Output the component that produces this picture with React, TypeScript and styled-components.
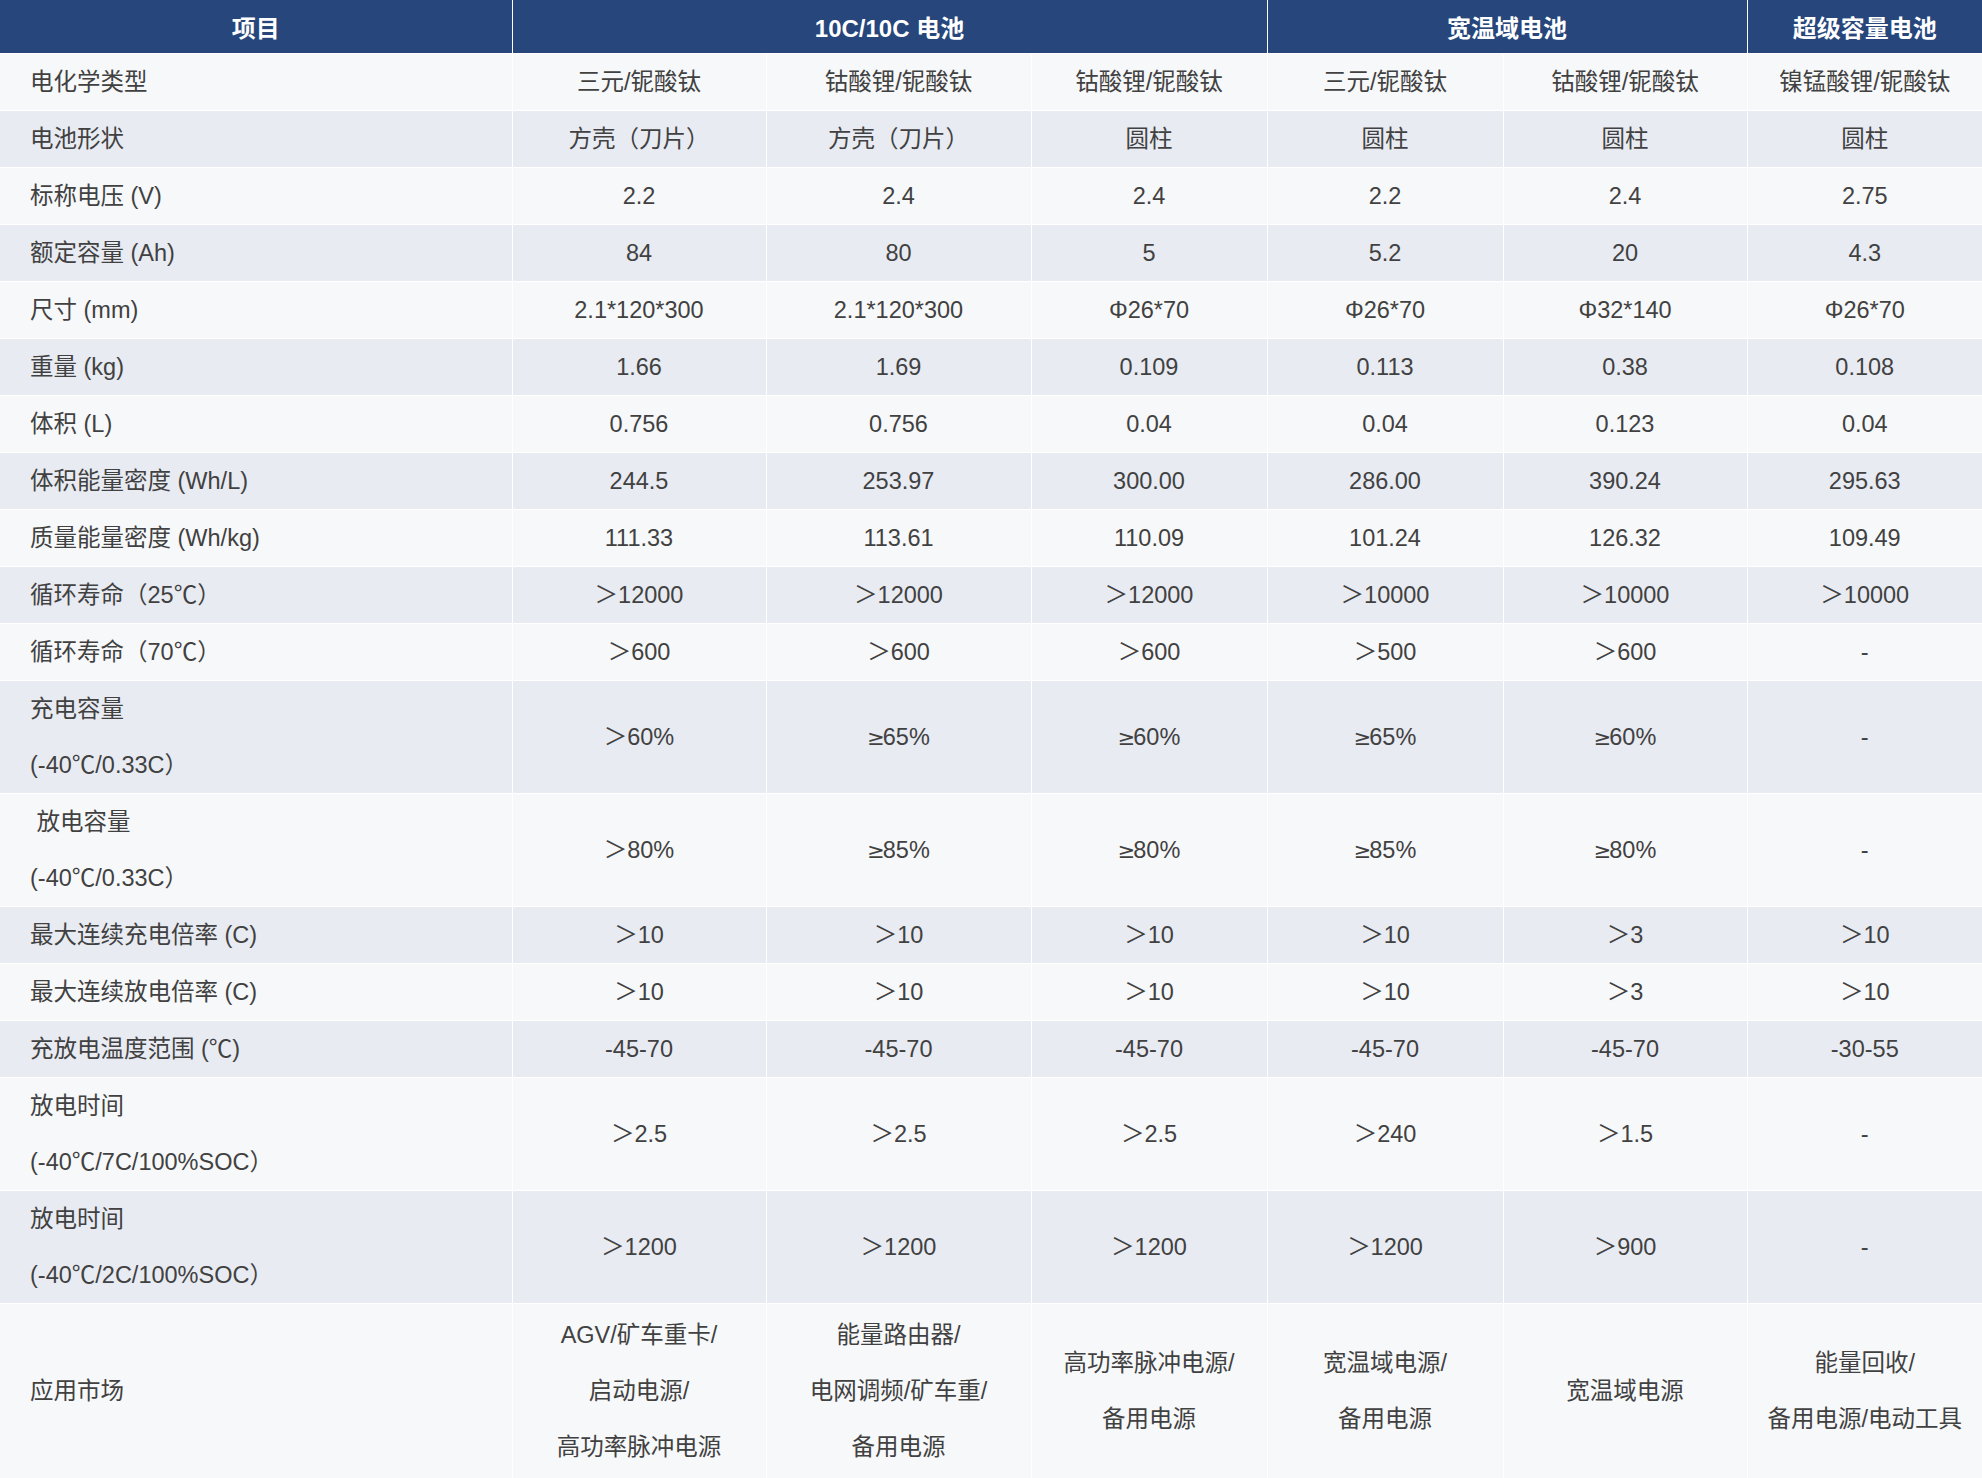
import * as React from "react";
import styled, { createGlobalStyle } from "styled-components";

const HEADER_BG = "#26467c";
const ROW_LIGHT = "#f7f8fa";
const ROW_DARK = "#e8ebf2";
const TEXT = "#414141";
const LINE = 56;

const COLUMN_WIDTHS = [512, 254, 265, 236, 236, 244, 235];

type Cell = string | string[];

interface SpecRow {
  label: Cell;
  values: Cell[];
  tall?: boolean;
}

const GROUPS = [
  { title: "项目", span: 1 },
  { title: "10C/10C 电池", span: 3 },
  { title: "宽温域电池", span: 2 },
  { title: "超级容量电池", span: 1 },
];

const ROWS: SpecRow[] = [
  { label: "电化学类型", values: ["三元/铌酸钛", "钴酸锂/铌酸钛", "钴酸锂/铌酸钛", "三元/铌酸钛", "钴酸锂/铌酸钛", "镍锰酸锂/铌酸钛"] },
  { label: "电池形状", values: ["方壳（刀片）", "方壳（刀片）", "圆柱", "圆柱", "圆柱", "圆柱"] },
  { label: "标称电压 (V)", values: ["2.2", "2.4", "2.4", "2.2", "2.4", "2.75"] },
  { label: "额定容量 (Ah)", values: ["84", "80", "5", "5.2", "20", "4.3"] },
  { label: "尺寸 (mm)", values: ["2.1*120*300", "2.1*120*300", "Φ26*70", "Φ26*70", "Φ32*140", "Φ26*70"] },
  { label: "重量 (kg)", values: ["1.66", "1.69", "0.109", "0.113", "0.38", "0.108"] },
  { label: "体积 (L)", values: ["0.756", "0.756", "0.04", "0.04", "0.123", "0.04"] },
  { label: "体积能量密度 (Wh/L)", values: ["244.5", "253.97", "300.00", "286.00", "390.24", "295.63"] },
  { label: "质量能量密度 (Wh/kg)", values: ["111.33", "113.61", "110.09", "101.24", "126.32", "109.49"] },
  { label: "循环寿命（25℃）", values: ["＞12000", "＞12000", "＞12000", "＞10000", "＞10000", "＞10000"] },
  { label: "循环寿命（70℃）", values: ["＞600", "＞600", "＞600", "＞500", "＞600", "-"] },
  { label: ["充电容量", "(-40℃/0.33C）"], values: ["＞60%", "≥65%", "≥60%", "≥65%", "≥60%", "-"] },
  { label: ["\u00a0放电容量", "(-40℃/0.33C）"], values: ["＞80%", "≥85%", "≥80%", "≥85%", "≥80%", "-"] },
  { label: "最大连续充电倍率 (C)", values: ["＞10", "＞10", "＞10", "＞10", "＞3", "＞10"] },
  { label: "最大连续放电倍率 (C)", values: ["＞10", "＞10", "＞10", "＞10", "＞3", "＞10"] },
  { label: "充放电温度范围 (℃)", values: ["-45-70", "-45-70", "-45-70", "-45-70", "-45-70", "-30-55"] },
  { label: ["放电时间", "(-40℃/7C/100%SOC）"], values: ["＞2.5", "＞2.5", "＞2.5", "＞240", "＞1.5", "-"] },
  { label: ["放电时间", "(-40℃/2C/100%SOC）"], values: ["＞1200", "＞1200", "＞1200", "＞1200", "＞900", "-"] },
  {
    label: "应用市场",
    tall: true,
    values: [
      ["AGV/矿车重卡/", "启动电源/", "高功率脉冲电源"],
      ["能量路由器/", "电网调频/矿车重/", "备用电源"],
      ["高功率脉冲电源/", "备用电源"],
      ["宽温域电源/", "备用电源"],
      "宽温域电源",
      ["能量回收/", "备用电源/电动工具"],
    ],
  },
];

const GlobalStyle = createGlobalStyle`
  html, body {
    margin: 0;
    padding: 0;
    background: #ffffff;
  }
  body {
    font-family: "Liberation Sans", "Noto Sans CJK SC", sans-serif;
    -webkit-font-smoothing: antialiased;
  }
`;

const SpecTable = styled.table`
  width: 1982px;
  table-layout: fixed;
  border-collapse: collapse;
  border-style: hidden;
  font-size: 23.5px;
  color: ${TEXT};
`;

const HeaderCell = styled.th`
  height: 53px;
  padding: 0;
  background: ${HEADER_BG};
  color: #ffffff;
  font-weight: 700;
  font-size: 24px;
  text-align: center;
  vertical-align: middle;
  border: 1px solid #ffffff;
`;

const BodyRow = styled.tr<{ $dark: boolean }>`
  background: ${(p) => (p.$dark ? ROW_DARK : ROW_LIGHT)};
`;

const LabelCell = styled.td<{ $tall?: boolean }>`
  padding: ${(p) => (p.$tall ? "3px" : "0")} 0 ${(p) => (p.$tall ? "3px" : "0")} 30px;
  line-height: ${LINE}px;
  text-align: left;
  vertical-align: middle;
  border: 1px solid #ffffff;
  white-space: nowrap;
`;

const ValueCell = styled.td<{ $tall?: boolean }>`
  padding: ${(p) => (p.$tall ? "3px 0" : "0")};
  line-height: ${LINE}px;
  text-align: center;
  vertical-align: middle;
  border: 1px solid #ffffff;
  white-space: nowrap;
`;

// the ≥ sign in the reference is as tall as the digits
const Relation = styled.span`
  font-family: "DejaVu Sans", sans-serif;
  font-size: 21px;
  letter-spacing: -2px;
`;

function LineText({ text }: { text: string }) {
  if (!text.startsWith("≥")) return <>{text}</>;
  return (
    <>
      <Relation>≥</Relation>
      {text.slice(1)}
    </>
  );
}

function Lines({ cell }: { cell: Cell }) {
  const lines = Array.isArray(cell) ? cell : [cell];
  return (
    <>
      {lines.map((line, i) => (
        <React.Fragment key={i}>
          {i > 0 && <br />}
          <LineText text={line} />
        </React.Fragment>
      ))}
    </>
  );
}

export default function App() {
  return (
    <>
      <GlobalStyle />
      <SpecTable>
        <colgroup>
          {COLUMN_WIDTHS.map((w, i) => (
            <col key={i} style={{ width: w }} />
          ))}
        </colgroup>
        <thead>
          <tr>
            {GROUPS.map((g) => (
              <HeaderCell key={g.title} colSpan={g.span}>
                {g.title}
              </HeaderCell>
            ))}
          </tr>
        </thead>
        <tbody>
          {ROWS.map((row, index) => (
            <BodyRow key={index} $dark={index % 2 === 1}>
              <LabelCell $tall={row.tall}>
                <Lines cell={row.label} />
              </LabelCell>
              {row.values.map((value, i) => (
                <ValueCell key={i} $tall={row.tall}>
                  <Lines cell={value} />
                </ValueCell>
              ))}
            </BodyRow>
          ))}
        </tbody>
      </SpecTable>
    </>
  );
}
